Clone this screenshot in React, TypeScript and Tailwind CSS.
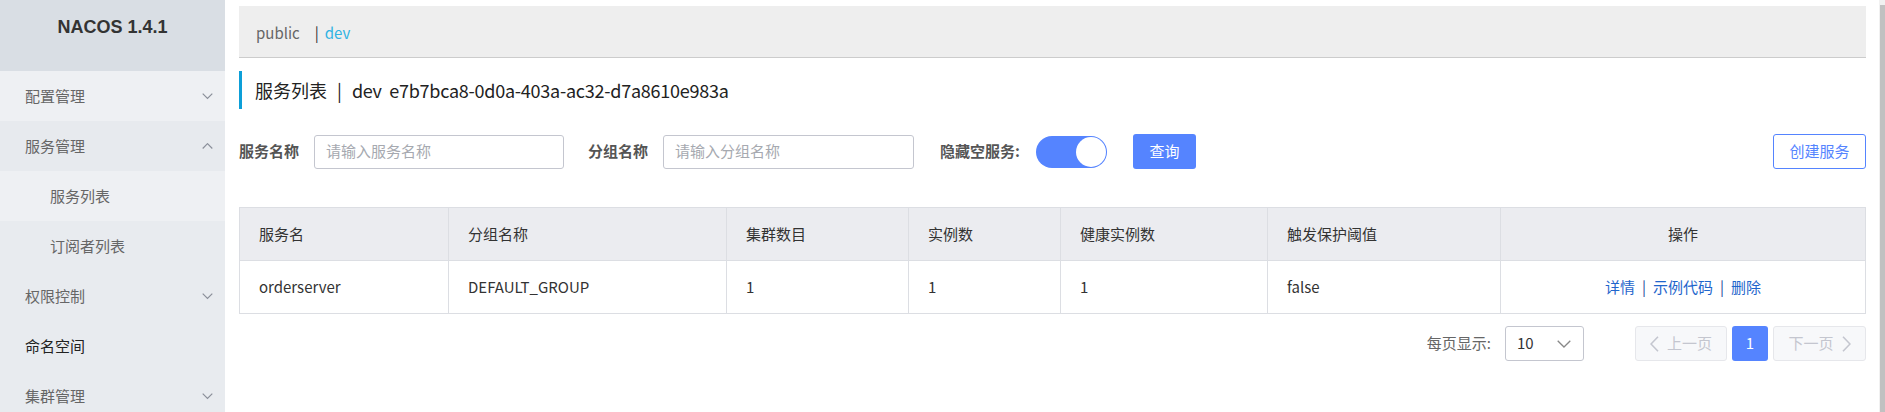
import React from 'react';

const MENU = [
  { label: '配置管理', arrow: 'down', bg: 'bg-[#eef0f3]' },
  { label: '服务管理', arrow: 'up', bg: 'bg-[#e7eaee]' },
  { label: '服务列表', sub: true, bg: 'bg-[#eef0f3]' },
  { label: '订阅者列表', sub: true },
  { label: '权限控制', arrow: 'down' },
  { label: '命名空间', dark: true },
  { label: '集群管理', arrow: 'down' },
];

const COLS = [
  { title: '服务名', width: 209, value: 'orderserver' },
  { title: '分组名称', width: 278, value: 'DEFAULT_GROUP' },
  { title: '集群数目', width: 182, value: '1' },
  { title: '实例数', width: 152, value: '1' },
  { title: '健康实例数', width: 207, value: '1' },
  { title: '触发保护阈值', width: 233, value: 'false' },
];

function Chevron({ dir, className = '' }: { dir: 'up' | 'down' | 'left' | 'right'; className?: string }) {
  if (dir === 'up' || dir === 'down') {
    const pts = dir === 'down' ? '0.7,0.7 5.5,5.5 10.3,0.7' : '0.7,5.5 5.5,0.7 10.3,5.5';
    return (
      <svg width="11" height="7" viewBox="0 0 11 7" className={className}>
        <polyline points={pts} fill="none" stroke="currentColor" strokeWidth="1.2" />
      </svg>
    );
  }
  const pts = dir === 'left' ? '8,0.7 1,8 8,15.3' : '1,0.7 8,8 1,15.3';
  return (
    <svg width="9" height="16" viewBox="0 0 9 16" className={className}>
      <polyline points={pts} fill="none" stroke="currentColor" strokeWidth="1.6" />
    </svg>
  );
}

function Sidebar() {
  return (
    <aside className="w-[225px] shrink-0 bg-[#e8ebef] flex flex-col overflow-hidden">
      <div className="h-[71px] shrink-0 bg-[#d9dee4] flex justify-center pt-[15px]">
        <span className="font-['Liberation_Sans',sans-serif] font-bold text-[18px] text-[#333] leading-[24px]">NACOS 1.4.1</span>
      </div>
      {MENU.map((m) => (
        <div
          key={m.label}
          className={`h-[50px] shrink-0 flex items-center justify-between pr-[12px] text-[15px] ${m.sub ? 'pl-[50px]' : 'pl-[25px]'} ${m.bg ?? ''} ${m.dark ? 'text-[#222]' : 'text-[#666]'}`}
        >
          <span>{m.label}</span>
          {m.arrow && <Chevron dir={m.arrow as 'up' | 'down'} className="text-[#8a8f99]" />}
        </div>
      ))}
    </aside>
  );
}

function FilterRow() {
  return (
    <div className="mt-[25px] flex items-center h-[35px]">
      <span className="font-bold text-[15px] text-[#555] mr-[15px]">服务名称</span>
      <div className="w-[250px] h-[34px] border border-[#c4c6cf] rounded-[3px] flex items-center pl-[11px] text-[15px] text-[#a6a9b0]">
        请输入服务名称
      </div>
      <span className="font-bold text-[15px] text-[#555] ml-[24px] mr-[15px]">分组名称</span>
      <div className="w-[251px] h-[34px] border border-[#c4c6cf] rounded-[3px] flex items-center pl-[11px] text-[15px] text-[#a6a9b0]">
        请输入分组名称
      </div>
      <span className="font-bold text-[15px] text-[#555] ml-[26px]">隐藏空服务:</span>
      <div className="ml-[16px] w-[71px] h-[32px] rounded-full bg-[#5584ff] flex items-center justify-end pr-[1px]">
        <div className="w-[30px] h-[30px] rounded-full bg-white" />
      </div>
      <button className="ml-[26px] w-[63px] h-[35px] rounded-[3px] bg-[#5584ff] text-white text-[15px]">查询</button>
      <button className="ml-auto w-[93px] h-[35px] rounded-[3px] border border-[#5584ff] text-[#5584ff] text-[15px] bg-white">
        创建服务
      </button>
    </div>
  );
}

function ServiceTable() {
  return (
    <table className="mt-[38px] w-full table-fixed border-collapse text-[15px] text-[#333]">
      <colgroup>
        {COLS.map((c) => (
          <col key={c.title} style={{ width: c.width }} />
        ))}
        <col />
      </colgroup>
      <thead>
        <tr className="bg-[#ebecf0]">
          {COLS.map((c) => (
            <th key={c.title} className="h-[53px] border border-[#dcdee3] pl-[19px] text-left font-normal">
              {c.title}
            </th>
          ))}
          <th className="h-[53px] border border-[#dcdee3] text-center font-normal">操作</th>
        </tr>
      </thead>
      <tbody>
        <tr>
          {COLS.map((c) => (
            <td key={c.title} className="h-[53px] border border-[#dcdee3] pl-[19px]">
              {c.value}
            </td>
          ))}
          <td className="h-[53px] border border-[#dcdee3] text-center text-[#1f66cc]">
            详情<span className="mx-[7px] text-[#1f4f99]">|</span>示例代码<span className="mx-[7px] text-[#1f4f99]">|</span>删除
          </td>
        </tr>
      </tbody>
    </table>
  );
}

function Pagination() {
  return (
    <div className="mt-[12px] flex items-center justify-end h-[35px] text-[15px]">
      <span className="text-[#666] mr-[14px]">每页显示:</span>
      <div className="w-[79px] h-[35px] border border-[#c4c6cf] rounded-[3px] flex items-center justify-between pl-[11px] pr-[12px] text-[#333]">
        <span>10</span>
        <svg width="14" height="8" viewBox="0 0 14 8" className="text-[#888]">
          <polyline points="0.7,0.7 7,7 13.3,0.7" fill="none" stroke="currentColor" strokeWidth="1.3" />
        </svg>
      </div>
      <div className="ml-[51px] w-[92px] h-[35px] border border-[#e6e7eb] bg-[#f7f8fa] rounded-[3px] flex items-center justify-center gap-[8px] text-[#c4c6cf]">
        <Chevron dir="left" />
        <span>上一页</span>
      </div>
      <div className="ml-[5px] w-[36px] h-[35px] bg-[#5584ff] rounded-[3px] flex items-center justify-center text-white">1</div>
      <div className="ml-[5px] w-[93px] h-[35px] border border-[#e6e7eb] bg-[#f7f8fa] rounded-[3px] flex items-center justify-center gap-[8px] text-[#c4c6cf]">
        <span>下一页</span>
        <Chevron dir="right" />
      </div>
    </div>
  );
}

export default function App() {
  return (
    <div className="flex h-[412px] w-full overflow-hidden bg-white font-['Noto_Sans_CJK_SC',sans-serif]">
      <Sidebar />
      <main className="flex-1 min-w-0 pl-[14px] pr-[13px] pt-[6px]">
        {/* namespace bar */}
        <div className="h-[52px] bg-[#eeeeee] border-b border-[#cccccc] flex items-center pl-[17px] pt-[4px] text-[15px]">
          <span className="text-[#666]">public</span>
          <span className="ml-[15px] text-[#333]">|</span>
          <span className="ml-[6px] text-[#2fb3e3]">dev</span>
        </div>

        {/* title */}
        <div className="mt-[13px] h-[38px] border-l-[3px] border-[#0d9fd8] pl-[13px] flex items-center text-[18px] text-[#222]">
          服务列表<span className="mx-[10px]">|</span>
          <span className="tracking-[-0.25px]">dev&nbsp;&nbsp;e7b7bca8-0d0a-403a-ac32-d7a8610e983a</span>
        </div>

        <FilterRow />
        <ServiceTable />
        <Pagination />
      </main>
      {/* scrollbar */}
      <div className="w-[6px] shrink-0 bg-[#f1f1f1] flex pl-[1px] pt-[5px]">
        <div className="flex-1 bg-[#c1c1c1]" />
      </div>
    </div>
  );
}
